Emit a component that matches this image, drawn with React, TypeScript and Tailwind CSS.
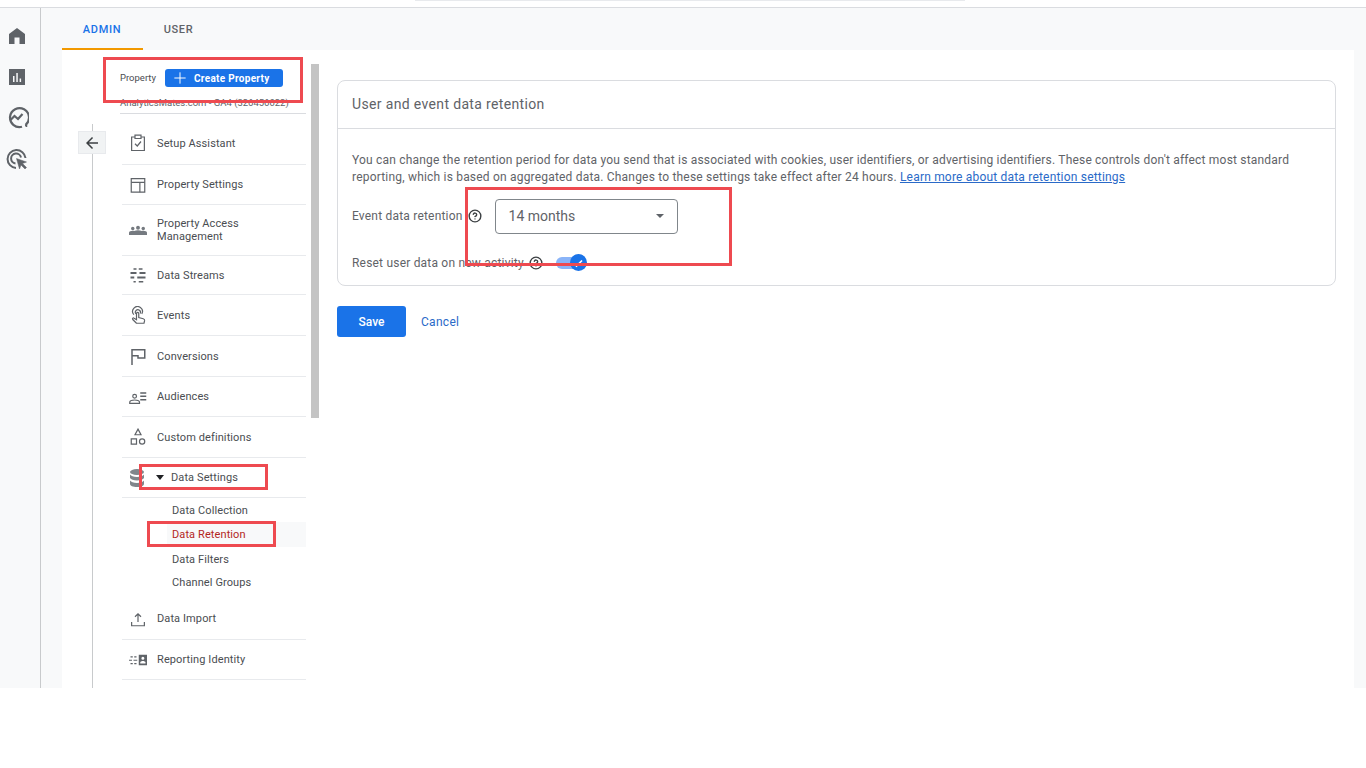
import * as React from "react";
import { CircleHelp, Plus } from "lucide-react";

const Icon = ({ children, size = 18 }: { children: React.ReactNode; size?: number }) => (
  <svg width={size} height={size} viewBox="0 0 24 24" fill="none" stroke="#5f6368" strokeWidth="1.6" className="shrink-0">
    {children}
  </svg>
);

const NAV_TOP = [
  {
    label: "Setup Assistant",
    h: "h-[43px]",
    icon: (
      <>
        <path d="M8 4H3.500v18h17V4H16" />
        <path d="M8 1.500h8v4.500H8z" />
        <path d="M8 13l3 3 5-6" />
      </>
    ),
  },
  {
    label: "Property Settings",
    h: "h-[40px]",
    icon: (
      <>
        <path d="M3 3.500h18v18H3z" />
        <path d="M3 8.500h18M14.500 8.500v13" />
      </>
    ),
  },
  {
    label: "Property Access Management",
    h: "h-[51px]",
    icon: (
      <g fill="#757a80" stroke="none">
        <circle cx="5" cy="10" r="2.300" />
        <circle cx="12" cy="9" r="2.600" />
        <circle cx="19" cy="10" r="2.300" />
        <path d="M0 18.500v-3c0-1.500 2.500-2.500 5-2.500 .8 0 1.400.1 2 .4 1.300-.8 3-1.200 5-1.200s3.700.4 5 1.200c.6-.3 1.200-.4 2-.4 2.500 0 5 1 5 2.500v3z" />
      </g>
    ),
  },
  {
    label: "Data Streams",
    h: "h-[39px]",
    icon: (
      <g stroke="none" fill="#5f6368">
        <path d="M6 3h4v2H6zM13 3h5v2h-5zM2 8h8v2.500H2zM14 8h8v2.500h-8zM2 14h5v2.500H2zM11 14h11v2.500H11zM6 20h3v2H6zM13 20h6v2h-6z" />
      </g>
    ),
  },
  {
    label: "Events",
    h: "h-[41px]",
    icon: (
      <>
        <path d="M6.500 11.500a6.500 6.500 0 1 1 10.500-1" />
        <path d="M9 10.500a3.500 3.500 0 1 1 6-.5" />
        <path d="M10 23l-5-5c-1-1.300.6-2.800 1.800-1.800l3.200 2V10a1.500 1.500 0 0 1 3 0v5.500l6 1.500c1.300.4 2 1.300 1.800 2.500l-.8 3.500z" />
      </>
    ),
  },
  {
    label: "Conversions",
    h: "h-[41px]",
    icon: <path d="M4 24V3.500h17v11h-9v-3H4" strokeWidth="2" />,
  },
  {
    label: "Audiences",
    h: "h-[40px]",
    icon: (
      <>
        <circle cx="7.500" cy="11" r="2.500" />
        <path d="M1 20.500v-1.500c0-1.800 3.500-3 6.500-3s6.500 1.200 6.500 3v1.500z" />
        <path d="M15 6.500h8M15 11h8M15 15.500h8" strokeWidth="2" />
      </>
    ),
  },
  {
    label: "Custom definitions",
    h: "h-[41px]",
    icon: (
      <>
        <path d="M12 1.500l4 7.500H8z" />
        <path d="M3 14.500h7v7H3z" />
        <circle cx="17.500" cy="18" r="3.500" />
      </>
    ),
  },
];

const NAV_BOTTOM = [
  {
    label: "Data Import",
    h: "h-[42px]",
    icon: (
      <>
        <path d="M12 16V5M8 9l4-4 4 4" />
        <path d="M3.500 16v5h17v-5" />
      </>
    ),
  },
  {
    label: "Reporting Identity",
    h: "h-[40px]",
    icon: (
      <g stroke="none" fill="#5f6368">
        <path d="M2 7h3v1.500H2zM7 7h3v1.500H7zM0 11.500h4V13H0zM6 11.500h5V13H6zM2 16h3v1.500H2zM7 16h3v1.500H7z" />
        <path fillRule="evenodd" d="M13 5h11v14H13zM18.500 7.500a2 2 0 1 0 0 4 2 2 0 0 0 0-4zM15 16.500h7V15c0-1-2-1.800-3.500-1.800S15 14 15 15z" />
      </g>
    ),
  },
];

const SUB_ITEMS = [
  { label: "Data Collection", h: "h-[24px]", active: false },
  { label: "Data Retention", h: "h-[25px]", active: true },
  { label: "Data Filters", h: "h-[24px]", active: false },
  { label: "Channel Groups", h: "h-[23px]", active: false },
];

const NavRow = ({ label, h, icon }: { label: string; h: string; icon: React.ReactNode }) => (
  <div className={`${h} flex items-center border-b border-[#e8eaed] pl-[7px]`}>
    <span className="w-[28px] shrink-0">
      <Icon>{icon}</Icon>
    </span>
    <span className="w-[100px] text-[11px] leading-[13px] tracking-[0.1px] text-[#4a4d51]">{label}</span>
  </div>
);

const RedBox = ({ className }: { className: string }) => (
  <div className={`absolute border-[3px] border-[#ee4a50] pointer-events-none ${className}`} />
);

export default function App() {
  return (
    <div className="relative h-[768px] overflow-hidden bg-white font-['Roboto',sans-serif]">
      <div className="h-[688px] flex flex-col overflow-hidden">
        {/* top bar */}
        <div className="h-[8px] shrink-0 border-b border-[#dadce0] flex justify-center">
          <div className="h-[1px] w-[550px] ml-[14px] bg-[#e8eaed]" />
        </div>

        <div className="flex flex-1 min-h-0">
          {/* rail */}
          <div className="w-[41px] shrink-0 border-r border-[#c8cacc] bg-[#f8f9fa] flex flex-col items-center gap-[17px] pt-[16px] pr-[7px]">
            <svg width="24" height="24" viewBox="0 0 24 24" fill="#5f6368">
              <path d="M12 4l8 6v10h-5.500v-6.500h-5V20H4V10z" />
            </svg>
            <svg width="24" height="24" viewBox="0 0 24 24" fill="#5f6368">
              <path d="M4 4h16v16H4zM8 17h1.500v-6H8zm3.300 0h1.500V8h-1.500zm3.300 0h1.500v-3.500h-1.500z" fillRule="evenodd" />
            </svg>
            <svg width="24" height="24" viewBox="0 0 24 24" fill="none" stroke="#5f6368" strokeWidth="2.200">
              <path d="M20.500 19A9.500 9.500 0 1 0 17 20.800" />
              <path d="M5.500 14l4-4 3.500 3 4.500-5" />
              <path d="M20 19.500h1.500V21" strokeWidth="1.500" />
            </svg>
            <svg width="24" height="24" viewBox="0 0 24 24" fill="none" stroke="#5f6368" strokeWidth="2">
              <path d="M11 21a9 9 0 1 1 9.500-10" />
              <path d="M10.500 16.500a5 5 0 1 1 5.500-6" />
              <path d="M11.500 11.500l10 3.500-4 1.500 4 4-1.500 1.500-4-4-1.500 4z" fill="#5f6368" strokeWidth="0.500" />
            </svg>
          </div>

          <div className="flex-1 min-w-0 bg-[#f8f9fa] pl-[21px] pr-[12px] flex flex-col">
            {/* tabs */}
            <div className="h-[42px] shrink-0 flex text-[11px] font-medium tracking-[0.65px]">
              <div className="w-[81px] h-[42px] border-b-2 border-[#f29900] text-[#1a73e8] flex items-center justify-center pt-[5px] pr-[1px]">ADMIN</div>
              <div className="w-[71px] h-[42px] text-[#5f6368] flex items-center justify-center pt-[3px]">USER</div>
            </div>

            <div className="flex-1 min-h-0 bg-white flex overflow-hidden">
              {/* back button + guide line */}
              <div className="relative w-[58px] shrink-0">
                <div className="absolute left-[30px] top-[74px] bottom-0 w-px bg-[#c8cacc]" />
                <div className="absolute left-[16px] top-[81px] w-[28px] h-[23px] bg-[#f1f3f4] border border-[#e8eaed] flex items-center justify-center">
                  <svg width="18" height="18" viewBox="0 0 24 24" fill="#3c4043">
                    <path d="M20 11H7.830l5.590-5.590L12 4l-8 8 8 8 1.410-1.410L7.830 13H20v-2z" />
                  </svg>
                </div>
              </div>

              {/* property nav */}
              <div className="w-[186px] shrink-0">
                <div className="h-[64px] border-b border-[#dadce0] pt-[19px]">
                  <div className="h-[18px] flex items-center gap-[9px]">
                    <span className="text-[9.500px] text-[#4a4d51]">Property</span>
                    <div className="w-[118px] h-[18px] rounded-[3px] bg-[#1a73e8] flex items-center text-white text-[10px] font-bold tracking-[0.3px] pl-[6px] gap-[5px]">
                      <Plus size={18} strokeWidth={1.300} />
                      <span>Create Property</span>
                    </div>
                  </div>
                  <div className="mt-[10px] text-[9.500px] leading-[12px] text-[#5f6368] whitespace-nowrap">AnalyticsMates.com - GA4 (326456022)</div>
                </div>
                <div className="ml-[2px]">
                  <div className="h-[8px]" />
                  {NAV_TOP.map((item) => (
                    <NavRow key={item.label} {...item} />
                  ))}
                  <div className="h-[40px] flex items-center border-b border-[#e8eaed] pl-[7px]">
                    <span className="w-[18px] shrink-0">
                      <svg width="18" height="20" viewBox="0 0 18 20" fill="#80868b">
                        <ellipse cx="8" cy="4" rx="7" ry="3" />
                        <path d="M1 6.500c1 1.600 3.500 2.400 7 2.400s6-.8 7-2.400V10c-1 1.600-3.500 2.400-7 2.400S2 11.600 1 10zM1 12.500c1 1.600 3.500 2.400 7 2.400s6-.8 7-2.400V16c0 1.700-3 3-7 3s-7-1.300-7-3z" />
                      </svg>
                    </span>
                    <span className="ml-[9px] w-0 h-0 border-x-[4px] border-x-transparent border-t-[5px] border-t-[#202124]" />
                    <span className="ml-[7px] pt-[1px] text-[11px] tracking-[0.1px] text-[#4a4d51]">Data Settings</span>
                  </div>
                  <div className="h-[100px]">
                    {SUB_ITEMS.map((s) => (
                      <div
                        key={s.label}
                        className={`${s.h} flex items-center ml-[45px] pl-[5px] pt-[2px] text-[11px] tracking-[0.1px] ${
                          s.active ? "bg-[#f8f9fa] text-[#b3261e]" : "text-[#4a4d51]"
                        }`}
                      >
                        {s.label}
                      </div>
                    ))}
                  </div>
                  {NAV_BOTTOM.map((item) => (
                    <NavRow key={item.label} {...item} />
                  ))}
                </div>
              </div>

              {/* scrollbar */}
              <div className="w-[31px] shrink-0 pl-[5px] pt-[14px]">
                <div className="w-[8px] h-[354px] bg-[#c4c4c4]" />
              </div>

              {/* main */}
              <div className="flex-1 min-w-0 pt-[30px] pr-[18px]">
                <div className="h-[206px] rounded-[8px] border border-[#dadce0]">
                  <div className="h-[48px] border-b border-[#dadce0] flex items-center pl-[14px] pb-[1px] text-[14px] tracking-[0.35px] text-[#5f6368]">
                    User and event data retention
                  </div>
                  <div className="pl-[14px] pr-[30px] pt-[23px]">
                    <p className="text-[12px] leading-[17px] tracking-[0.195px] text-[#5f6368]">
                      You can change the retention period for data you send that is associated with cookies, user identifiers, or advertising identifiers. These controls don't affect most standard reporting, which is based on aggregated data. Changes to these settings take effect after 24 hours.{" "}
                      <a className="text-[#2a6ac8] underline">Learn more about data retention settings</a>
                    </p>
                    <div className="mt-[13px] h-[34px] flex items-center">
                      <span className="text-[12px] tracking-[0.2px] text-[#5f6368]">Event data retention</span>
                      <CircleHelp size={14} strokeWidth={2.400} className="ml-[5px] text-[#3c4043]" />
                      <div className="ml-[13px] w-[183px] h-[35px] rounded-[4px] border border-[#80868b] flex items-center justify-between pl-[13px] pr-[13px] text-[14px] text-[#5f6368]">
                        <span>14 months</span>
                        <span className="w-0 h-0 border-x-[4.500px] border-x-transparent border-t-[4.500px] border-t-[#5f6368]" />
                      </div>
                    </div>
                    <div className="mt-[20px] h-[20px] flex items-center">
                      <span className="text-[12px] tracking-[0.2px] text-[#5f6368]">Reset user data on new activity</span>
                      <CircleHelp size={14} strokeWidth={2.400} className="ml-[5px] text-[#3c4043]" />
                      <div className="relative ml-[13px] w-[31px] h-[20px] flex items-center">
                        <div className="w-[26px] h-[12px] rounded-full bg-[#8ab4f8]" />
                        <div className="absolute right-0 top-[1px] w-[17px] h-[17px] rounded-full bg-[#1a73e8] flex items-center justify-center">
                          <svg width="12" height="12" viewBox="0 0 24 24" fill="none" stroke="white" strokeWidth="3.500">
                            <path d="M4 13l5 5L20 7" />
                          </svg>
                        </div>
                      </div>
                    </div>
                  </div>
                </div>
                <div className="mt-[20px] flex items-center">
                  <div className="w-[69px] h-[31px] rounded-[3px] bg-[#1a73e8] text-white text-[12px] font-medium flex items-center justify-center">Save</div>
                  <span className="ml-[15px] text-[12px] text-[#2a6ac8] tracking-[0.3px]">Cancel</span>
                </div>
              </div>
            </div>
          </div>
        </div>
      </div>

      {/* red annotation boxes from the screenshot */}
      <RedBox className="left-[103px] top-[57px] w-[200px] h-[46px]" />
      <RedBox className="left-[139px] top-[464px] w-[129px] h-[26px]" />
      <RedBox className="left-[147px] top-[521px] w-[129px] h-[26px]" />
      <RedBox className="left-[465px] top-[187px] w-[267px] h-[79px]" />
    </div>
  );
}
